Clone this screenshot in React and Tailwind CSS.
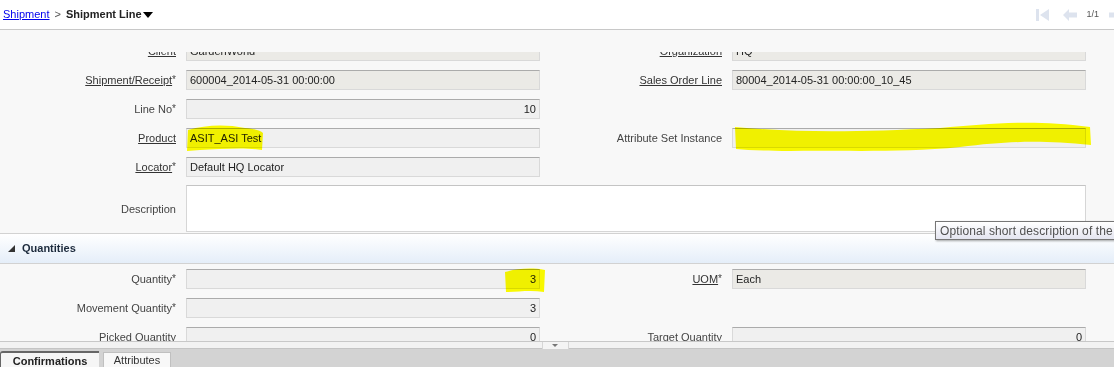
import React from "react";

const font = { fontFamily: '"Liberation Sans", Arial, sans-serif' };

// one label cell of the form grid
const Label = ({ text, link, req }) => (
  <div className="flex items-center justify-end h-[20px] whitespace-nowrap text-[#444]">
    <span className={link ? "underline text-[#333]" : ""}>{text}</span>
    {req && <span className="text-[10px] -mt-[2px]">*</span>}
  </div>
);

// read-only input box
const Field = ({ value, right, beige }) => (
  <div
    className={`h-[20px] flex items-center px-[3px] border border-[#d9d9d9] border-t-[#ababab] text-[#222] whitespace-nowrap overflow-hidden ${
      right ? "justify-end" : ""
    } ${beige ? "bg-[#ebeae6]" : "bg-[#f0f0f0]"}`}
  >
    {value}
  </div>
);

const Empty = () => <div className="h-[20px]" />;

const Header = () => (
  <div className="h-[30px] shrink-0 bg-white border-b border-[#c8c8c8] flex items-center justify-between pl-[3px] pr-0">
    <div className="flex items-center text-[11px] text-[#333]">
      <span className="text-[#0000ee] underline">Shipment</span>
      <span className="mx-[5px] text-[#555]">&gt;</span>
      <span className="font-bold text-[#222]">Shipment Line</span>
      <svg width="10" height="6" viewBox="0 0 10 6" className="ml-[1px]">
        <polygon points="0,0 10,0 5,6" fill="#000" />
      </svg>
    </div>
    <div className="flex items-center">
      {/* first */}
      <svg width="14" height="12" viewBox="0 0 14 12" className="mr-[13px]">
        <rect x="0" y="0" width="3" height="12" fill="#dde3ee" />
        <polygon points="13,0 13,12 4,6" fill="#dde3ee" />
      </svg>
      {/* previous */}
      <svg width="14" height="12" viewBox="0 0 14 12" className="mr-[9px]">
        <polygon points="0,6 6,0 6,3.5 14,3.5 14,8.5 6,8.5 6,12" fill="#dde3ee" />
      </svg>
      <span className="text-[9px] text-[#555] mr-[10px]">1/1</span>
      <svg width="5" height="12" viewBox="0 0 5 12">
        <rect x="0" y="3.5" width="5" height="5" fill="#dde3ee" />
      </svg>
    </div>
  </div>
);

const Highlights = () => (
  <svg
    width="1114"
    height="367"
    className="absolute left-0 top-0 pointer-events-none mix-blend-multiply"
  >
    <path
      d="M188 130 C205 125 225 124 245 128 C255 129 260 130 263 133 L262 150 C245 147 220 149 200 150 L187 151 Z"
      fill="#ffff00"
    />
    <path
      d="M735 127 C800 133 860 132 940 128 C990 124 1030 119 1090 127 L1091 145 C1040 140 1010 141 960 147 C900 153 840 150 790 151 C765 151 748 150 736 149 Z"
      fill="#ffff00"
    />
    <path
      d="M505 272 C515 269 530 267 545 270 L544 292 C530 290 518 292 506 292 Z"
      fill="#ffff00"
    />
  </svg>
);

const Tooltip = () => (
  <div className="absolute left-[935px] top-[221px] h-[19px] w-[220px] border border-[#767676] bg-gradient-to-b from-white to-[#e4e5f0] shadow-[1px_1px_2px_rgba(0,0,0,0.35)] flex items-center pl-[4px] text-[12px] tracking-[0.1px] text-[#505050] whitespace-nowrap">
    Optional short description of the&nbsp;&nbsp;record
  </div>
);

const SectionHeader = ({ title }) => (
  <div className="h-[31px] mt-[1px] border-t border-b border-[#d2d2d2] bg-gradient-to-b from-white to-[#e5eef9] flex items-center pl-[8px]">
    <svg width="7" height="7" viewBox="0 0 7 7" className="mr-[7px]">
      <polygon points="7,0 7,7 0,7" fill="#333" />
    </svg>
    <span className="font-bold text-[#1c2a3c]">{title}</span>
  </div>
);

const BottomBar = () => (
  <div className="shrink-0">
    <div className="h-[7px] border-t border-[#c8c8c8] bg-[#f2f2f2] flex justify-center">
      <div className="w-[27px] h-[7px] border-x border-[#d6d6d6] bg-[#f4f4f4] flex items-center justify-center -ml-[4px]">
        <svg width="6" height="3" viewBox="0 0 6 3">
          <polygon points="0,0 6,0 3,3" fill="#777" />
        </svg>
      </div>
    </div>
    <div className="h-[19px] bg-[#d3d3d3] border-t border-[#c4c4c4] flex items-end gap-[4px]">
      <div className="h-[16px] w-[99px] bg-[#f6f6f6] border-t-2 border-l border-[#666] rounded-tl-[3px] flex items-end justify-center font-bold text-[#222] leading-[12px]">
        Confirmations
      </div>
      <div className="h-[15px] w-[68px] bg-[#f8f8f8] border border-b-0 border-[#c0c0c0] flex items-end justify-center text-[#333] leading-[13px]">
        Attributes
      </div>
    </div>
  </div>
);

export default function App() {
  return (
    <div
      className="relative w-[1114px] h-[367px] overflow-hidden bg-[#f8f8f8] flex flex-col text-[11px] text-[#333]"
      style={font}
    >
      <Header />
      <div className="h-[22px] shrink-0" />
      <div className="flex-1 overflow-hidden">
        <div className="-mt-[11px]">
          <div className="grid grid-cols-[176px_354px_172px_354px] gap-x-[10px] gap-y-[9px]">
            <Label text="Client" link />
            <Field value="GardenWorld" beige />
            <Label text="Organization" link />
            <Field value="HQ" beige />

            <Label text="Shipment/Receipt" link req />
            <Field value="600004_2014-05-31 00:00:00" beige />
            <Label text="Sales Order Line" link />
            <Field value="80004_2014-05-31 00:00:00_10_45" beige />

            <Label text="Line No" req />
            <Field value="10" right />
            <Empty />
            <Empty />

            <Label text="Product" link />
            <Field value="ASIT_ASI Test" />
            <Label text="Attribute Set Instance" />
            <Field value="" />

            <Label text="Locator" link req />
            <Field value="Default HQ Locator" />
            <Empty />
            <Empty />

            <div className="flex items-center justify-end text-[#444]">Description</div>
            <div className="col-span-3 h-[47px] -mt-[1px] bg-white border border-[#d6d6d6] border-t-[#c4c4c4]" />
          </div>

          <SectionHeader title="Quantities" />

          <div className="grid grid-cols-[176px_354px_172px_354px] gap-x-[10px] gap-y-[9px] pt-[5px]">
            <Label text="Quantity" req />
            <Field value="3" right />
            <Label text="UOM" link req />
            <Field value="Each" beige />

            <Label text="Movement Quantity" req />
            <Field value="3" right />
            <Empty />
            <Empty />

            <Label text="Picked Quantity" />
            <Field value="0" right />
            <Label text="Target Quantity" />
            <Field value="0" right />
          </div>
        </div>
      </div>
      <BottomBar />
      <Tooltip />
      <Highlights />
    </div>
  );
}
